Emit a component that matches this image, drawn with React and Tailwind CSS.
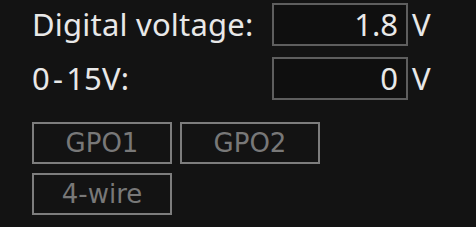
import React from "react";

function Row({ label, value }) {
  return (
    <div className="flex items-center h-[43px]">
      <div className="w-[240px] text-[31px] leading-none text-[#e8e8e8] tracking-[0.2px]">{label}</div>
      <div className="w-[136px] h-[43px] border-2 border-[#5e5e5e] bg-[#0f0f0f] flex items-center justify-end pr-[8px] text-[31px] leading-none text-[#e8e8e8]">
        {value}
      </div>
      <div className="ml-[4px] text-[31px] leading-none text-[#e8e8e8]">V</div>
    </div>
  );
}

function Btn({ children }) {
  return (
    <div className="w-[140px] h-[42px] border-2 border-[#7d7d7d] flex items-center justify-center text-[26px] text-[#787878] leading-none" style={{ fontFamily: '"DejaVu Sans", sans-serif' }}>
      {children}
    </div>
  );
}

export default function App() {
  return (
    <div className="w-[476px] h-[227px] bg-[#131313] pl-[32px] pt-[3px]" style={{ fontFamily: '"Noto Sans", Inter, sans-serif' }}>
      <div className="flex flex-col gap-[11px]">
        <Row label="Digital voltage:" value="1.8" />
        <Row label={<>0<span className="mx-[3px]">-</span>15V:</>} value="0" />
      </div>
      <div className="mt-[22px] grid grid-cols-[140px_140px] gap-x-[8px] gap-y-[9px]">
        <Btn>GPO1</Btn>
        <Btn>GPO2</Btn>
        <Btn>4-wire</Btn>
      </div>
    </div>
  );
}
